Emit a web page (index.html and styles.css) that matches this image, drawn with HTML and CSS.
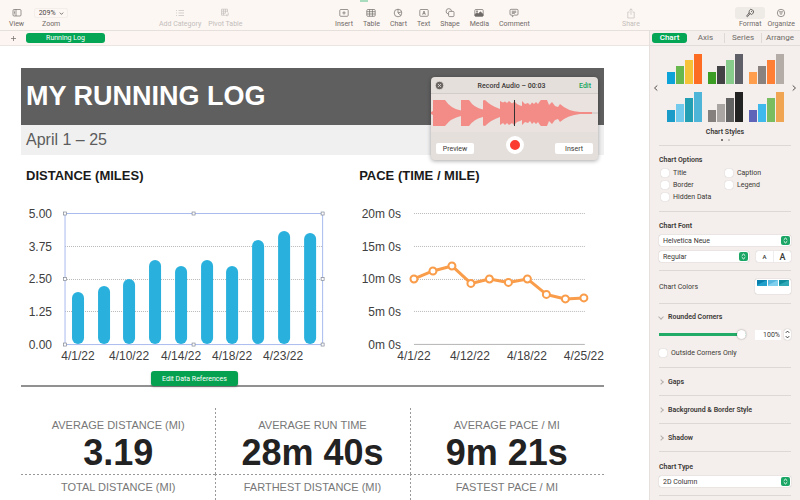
FILE: index.html
```html
<!DOCTYPE html>
<html lang="en">
<head>
  <meta charset="utf-8">
  <title>Running Log</title>
  <link rel="stylesheet" href="styles.css">
</head>
<body>
  <header class="toolbar">
    <span class="notch"></span>
    <div class="tool-group">
      <button class="tool">
        <span class="icon"><svg width="10" height="10" viewBox="0 0 10 10"><rect x="1" y="1.5" width="8" height="6.5" rx="1"/><path d="M4 1.5V8M2 3.2h1M2 4.5h1M2 5.8h1"/></svg></span>
        View
      </button>
      <label class="tool zoom">
        <span class="icon">
          <select><option>209%</option></select>
          <svg width="5" height="5" viewBox="0 0 5 5"><path d="M.8 1.6L2.5 3.4L4.2 1.6"/></svg>
        </span>
        Zoom
      </label>
    </div>
    <div class="tool-group tool-group-table">
      <button class="tool" disabled>
        <span class="icon"><svg width="10" height="10" viewBox="0 0 10 10"><path d="M1 2.5h1M1 5h1M1 7.5h1M3.5 2.5H9M3.5 5H9M3.5 7.5H9"/></svg></span>
        Add Category
      </button>
      <button class="tool" disabled>
        <span class="icon"><svg width="10" height="10" viewBox="0 0 10 10"><path d="M1.5 1.2h6v3M1.5 1.2v6h4M1.5 3.2h6M1.5 5.2h4M3.5 1.2v6M5.5 1.2v4M8.2 4.5v2.8H6M7 6.3l-1 1l1 1"/></svg></span>
        Pivot Table
      </button>
    </div>
    <div class="tool-group">
      <button class="tool">
        <span class="icon"><svg width="10" height="10" viewBox="0 0 10 10"><rect x=".8" y="1.5" width="8.4" height="6.8" rx="1"/><path d="M5 3.2v3.4M3.3 4.9h3.4"/></svg></span>
        Insert
      </button>
      <button class="tool">
        <span class="icon"><svg width="10" height="10" viewBox="0 0 10 10"><rect x=".8" y="1.5" width="8.4" height="6.8" rx="1"/><path d="M.8 3.7h8.4M.8 6h8.4M3.6 1.5v6.8M6.4 1.5v6.8"/></svg></span>
        Table
      </button>
      <button class="tool">
        <span class="icon"><svg width="10" height="10" viewBox="0 0 10 10"><circle cx="5" cy="5" r="3.8"/><path d="M5 1.2V5l2.9 2.4M5 5l3.6-1.2"/></svg></span>
        Chart
      </button>
      <button class="tool">
        <span class="icon"><svg width="10" height="10" viewBox="0 0 10 10"><rect x=".8" y="1.5" width="8.4" height="6.8" rx="1"/><path d="M3.6 6.7L5 3l1.4 3.7M4.1 5.6h1.8"/></svg></span>
        Text
      </button>
      <button class="tool">
        <span class="icon"><svg width="10" height="10" viewBox="0 0 10 10"><path d="M3.3 6A2.7 2.7 0 1 1 6.5 3.2"/><rect x="3.6" y="3.4" width="5.4" height="5.2" rx="1"/></svg></span>
        Shape
      </button>
      <button class="tool">
        <span class="icon"><svg width="10" height="10" viewBox="0 0 10 10"><rect x=".8" y="1.5" width="8.4" height="6.8" rx="1"/><path class="solid" d="M1 6.4l2-1.8l1.4 1.2l2-2l2.6 2.4V8H1z"/><circle class="solid" cx="3" cy="3.2" r=".5"/></svg></span>
        Media
      </button>
      <button class="tool">
        <span class="icon"><svg width="10" height="10" viewBox="0 0 10 10"><path d="M2 1.3h6a1 1 0 0 1 1 1v3.8a1 1 0 0 1-1 1H5.2L3.4 8.8V7.1H2a1 1 0 0 1-1-1V2.3a1 1 0 0 1 1-1zM2.8 3.2h4.4M2.8 4.3h4.4M2.8 5.4h3"/></svg></span>
        Comment
      </button>
    </div>
    <div class="tool-group">
      <button class="tool" disabled>
        <span class="icon"><svg width="10" height="11" viewBox="0 0 10 11"><path d="M3.5 4H1.8v6h6.4V4H6.5M5 6.8V.8M3.3 2.4L5 .8l1.7 1.6"/></svg></span>
        Share
      </button>
    </div>
    <div class="tool-group tool-group-end">
      <button class="tool">
        <span class="icon active"><svg width="10" height="10" viewBox="0 0 10 10"><path d="M5.8 1.2l2.6 1.5c.5 2-.3 3-1.8 3.8L4 4.8c0-1.6.4-2.8 1.8-3.6zM4 4.8L1.6 8.2l.8.6L5.2 5.6M6 3.2l1.2.8"/></svg></span>
        Format
      </button>
      <button class="tool">
        <span class="icon"><svg width="10" height="10" viewBox="0 0 10 10"><circle cx="5" cy="5" r="3.7"/><path d="M2.9 3.8h4.2M3.6 5.1h2.8M4.4 6.4h1.2"/></svg></span>
        Organize
      </button>
    </div>
  </header>

  <div class="workspace">
    <main class="document">
      <nav class="sheet-tabs">
        <button class="add-sheet" aria-label="Add sheet"><svg width="7" height="7" viewBox="0 0 7 7"><path d="M3.5 1v5M1 3.5h5"/></svg></button>
        <button class="sheet-tab">Running Log</button>
      </nav>

      <div class="sheet">
        <h1>MY RUNNING LOG</h1>
        <p class="subtitle">April 1 – 25</p>

        <div class="charts">
          <section class="chart">
            <h2>DISTANCE (MILES)</h2>
            <svg viewBox="0 0 333 181">
              <g class="grid-lines">
                <path d="M44 56.5h257M44 89.5h257M44 121.5h257"/>
              </g>
              <g class="bars">
                <rect x="51" y="102" width="12" height="52" rx="6"/>
                <rect x="77" y="96" width="12" height="58" rx="6"/>
                <rect x="102" y="89" width="12" height="65" rx="6"/>
                <rect x="128" y="70" width="12" height="84" rx="6"/>
                <rect x="154" y="76" width="12" height="78" rx="6"/>
                <rect x="180" y="70" width="12" height="84" rx="6"/>
                <rect x="205" y="76" width="12" height="78" rx="6"/>
                <rect x="231" y="50" width="12" height="104" rx="6"/>
                <rect x="257" y="41" width="12" height="113" rx="6"/>
                <rect x="283" y="43" width="12" height="111" rx="6"/>
              </g>
              <rect class="selection" x="44" y="23.5" width="257.5" height="131"/>
              <g class="handles">
                <rect x="42.5" y="22" width="3" height="3"/>
                <rect x="171" y="22" width="3" height="3"/>
                <rect x="300" y="22" width="3" height="3"/>
                <rect x="42.5" y="87.5" width="3" height="3"/>
                <rect x="300" y="87.5" width="3" height="3"/>
                <rect x="42.5" y="153" width="3" height="3"/>
                <rect x="171" y="153" width="3" height="3"/>
                <rect x="300" y="153" width="3" height="3"/>
              </g>
              <g class="axis axis-y">
                <text x="31" y="28">5.00</text>
                <text x="31" y="61">3.75</text>
                <text x="31" y="93">2.50</text>
                <text x="31" y="126">1.25</text>
                <text x="31" y="159">0.00</text>
              </g>
              <g class="axis axis-x">
                <text x="57" y="170">4/1/22</text>
                <text x="108" y="170">4/10/22</text>
                <text x="160" y="170">4/14/22</text>
                <text x="211" y="170">4/18/22</text>
                <text x="262" y="170">4/23/22</text>
              </g>
            </svg>
            <button class="edit-refs">Edit Data References</button>
          </section>

          <section class="chart">
            <h2>PACE (TIME / MILE)</h2>
            <svg viewBox="0 0 250 181">
              <g class="grid-lines">
                <path d="M60 23.5h171M60 56.5h171M60 89.5h171M60 121.5h171"/>
              </g>
              <path class="baseline" d="M60 154.5h171"/>
              <path class="pace-line" d="M60 89L79 81L98 76L117 93.5L135.5 89L154.5 92.5L173.5 89L192.5 104.5L211.5 109L230 108"/>
              <g class="pace-points">
                <circle cx="60" cy="89" r="3.5"/>
                <circle cx="79" cy="81" r="3.5"/>
                <circle cx="98" cy="76" r="3.5"/>
                <circle cx="117" cy="93.5" r="3.5"/>
                <circle cx="135.5" cy="89" r="3.5"/>
                <circle cx="154.5" cy="92.5" r="3.5"/>
                <circle cx="173.5" cy="89" r="3.5"/>
                <circle cx="192.5" cy="104.5" r="3.5"/>
                <circle cx="211.5" cy="109" r="3.5"/>
                <circle cx="230" cy="108" r="3.5"/>
              </g>
              <g class="axis axis-y">
                <text x="47" y="28">20m 0s</text>
                <text x="47" y="61">15m 0s</text>
                <text x="47" y="93">10m 0s</text>
                <text x="47" y="126">5m 0s</text>
                <text x="47" y="159">0m 0s</text>
              </g>
              <g class="axis axis-x">
                <text x="60" y="170">4/1/22</text>
                <text x="116" y="170">4/12/22</text>
                <text x="173" y="170">4/18/22</text>
                <text x="230" y="170">4/25/22</text>
              </g>
            </svg>
          </section>
        </div>

        <div class="stats">
          <div class="stat"><h3>AVERAGE DISTANCE (MI)</h3><strong>3.19</strong></div>
          <div class="stat"><h3>AVERAGE RUN TIME</h3><strong>28m 40s</strong></div>
          <div class="stat"><h3>AVERAGE PACE / MI</h3><strong>9m 21s</strong></div>
          <div class="stat next"><h3>TOTAL DISTANCE (MI)</h3></div>
          <div class="stat next"><h3>FARTHEST DISTANCE (MI)</h3></div>
          <div class="stat next"><h3>FASTEST PACE / MI</h3></div>
        </div>
      </div>

      <div class="recorder">
        <div class="recorder-head">
          <button class="close" aria-label="Close"><svg width="9" height="9" viewBox="0 0 9 9"><circle cx="4.5" cy="4.5" r="4.2"/><path d="M3 3l3 3M6 3L3 6"/></svg></button>
          <span>Record Audio – 00:03</span>
          <button class="edit">Edit</button>
        </div>
        <svg class="wave" viewBox="0 0 167 38">
          <path class="wave-axis" d="M0 19H167"/>
          <path class="wave-shape" d="M0 18L2 17V6H14Q20 15 30 16.5V6H38Q43 14 52 15.5V6.500L54 6Q60 12 69 15V7L72 8.500L74 7.500L76 9L78 7L81 9.500L83 8L83 7L86 10L89 11.500L91 12V7L94 10L97 9L99 11L101 8.500L103 10L105 8L107 10L109 7L110 6H116L118 11L121 8L124 12L127 13L129 10Q137 17.500 149 18L161 18V20L149 20Q137 21 129 28L127 25L124 26L121 30L118 27L116 32H110L109 31L107 28L105 30L103 28L101 30L99 27L97 29L94 28L91 31V26L89 27L86 28L83 31L81 29L78 31L76 29L74 31L72 29L69 31V23Q60 26 54 32L52 31.500V23Q43 25 38 32H30V22Q20 24 14 32H2V21L0 20Z"/>
          <path class="playhead" d="M83.5 6V32"/>
        </svg>
        <div class="recorder-actions">
          <button>Preview</button>
          <button class="record" aria-label="Record"></button>
          <button>Insert</button>
        </div>
      </div>
    </main>

    <aside class="inspector">
      <nav class="inspector-tabs">
        <button class="current">Chart</button>
        <button>Axis</button>
        <button>Series</button>
        <button>Arrange</button>
      </nav>

      <section class="panel styles">
        <div class="gallery">
          <button aria-label="Previous styles"><svg width="6" height="8" viewBox="0 0 6 8"><path d="M4.3 1.5L1.5 4L4.3 6.5"/></svg></button>
          <div class="thumbs">
            <svg viewBox="0 0 35 30"><path fill="#0da2d8" d="M0 18h8v12H0z"/><path fill="#68b84e" d="M9 12h8v18H9z"/><path fill="#f6c237" d="M18 6h8v24h-8z"/><path fill="#fc6c22" d="M27 0h8v30h-8z"/></svg>
            <svg viewBox="0 0 35 30"><path fill="#3d9e25" d="M0 18h8v12H0z"/><path fill="#434345" d="M9 12h8v18H9z"/><path fill="#87cc8a" d="M18 6h8v24h-8z"/><path fill="#5f5f67" d="M27 0h8v30h-8z"/></svg>
            <svg viewBox="0 0 35 30"><path fill="#ff9f4d" d="M0 18h8v12H0z"/><path fill="#8a827e" d="M9 12h8v18H9z"/><path fill="#ff8035" d="M18 6h8v24h-8z"/><path fill="#b4ada7" d="M27 0h8v30h-8z"/></svg>
            <svg viewBox="0 0 35 30"><path fill="#1b9cc8" d="M0 18h8v12H0z"/><path fill="#72caed" d="M9 12h8v18H9z"/><path fill="#239fb3" d="M18 6h8v24h-8z"/><path fill="#4fb5d8" d="M27 0h8v30h-8z"/></svg>
            <svg viewBox="0 0 35 30"><path fill="#85807d" d="M0 18h8v12H0z"/><path fill="#aaa6a3" d="M9 12h8v18H9z"/><path fill="#626262" d="M18 6h8v24h-8z"/><path fill="#222222" d="M27 0h8v30h-8z"/></svg>
            <svg viewBox="0 0 35 30"><path fill="#6064b8" d="M0 18h8v12H0z"/><path fill="#3fb9ec" d="M9 12h8v18H9z"/><path fill="#7abd61" d="M18 6h8v24h-8z"/><path fill="#f0a553" d="M27 0h8v30h-8z"/></svg>
          </div>
          <button aria-label="Next styles"><svg width="6" height="8" viewBox="0 0 6 8"><path d="M1.7 1.5L4.5 4L1.7 6.5"/></svg></button>
        </div>
        <h4>Chart Styles</h4>
        <div class="dots"><i class="on"></i><i></i></div>
      </section>

      <section class="panel options">
        <h4>Chart Options</h4>
        <div class="checks">
          <label><input type="checkbox"> Title</label>
          <label><input type="checkbox"> Caption</label>
          <label><input type="checkbox"> Border</label>
          <label><input type="checkbox"> Legend</label>
          <label><input type="checkbox"> Hidden Data</label>
        </div>
      </section>

      <section class="panel font">
        <h4>Chart Font</h4>
        <div class="select">
          <select aria-label="Font family"><option>Helvetica Neue</option></select>
          <svg width="9" height="9" viewBox="0 0 9 9"><rect width="9" height="9" rx="2"/><path d="M2.8 3.7L4.5 2.1L6.2 3.7M2.8 5.3L4.5 6.9L6.2 5.3"/></svg>
        </div>
        <div class="font-row">
          <div class="select">
            <select aria-label="Font style"><option>Regular</option></select>
            <svg width="9" height="9" viewBox="0 0 9 9"><rect width="9" height="9" rx="2"/><path d="M2.8 3.7L4.5 2.1L6.2 3.7M2.8 5.3L4.5 6.9L6.2 5.3"/></svg>
          </div>
          <div class="font-size">
            <button class="smaller" aria-label="Smaller">A</button>
            <button class="larger" aria-label="Larger">A</button>
          </div>
        </div>
      </section>

      <section class="panel colors">
        <span>Chart Colors</span>
        <button class="swatch" aria-label="Chart colors">
          <svg viewBox="0 0 32 6"><path fill="#1f9fc9" d="M0 0h10v6H0z"/><path fill="#087fac" d="M0 0h10L0 5z"/><path fill="#7fcfee" d="M11 0h10v6H11z"/><path fill="#56b8de" d="M11 0h10L11 5z"/><path fill="#2fa9b5" d="M22 0h10v6H22z"/><path fill="#108c9d" d="M22 0h10L22 5z"/></svg>
        </button>
      </section>

      <section class="panel corners">
        <h4 class="disclosure open">Rounded Corners</h4>
        <div class="slider-row">
          <input type="range" min="0" max="100" value="100" aria-label="Corner radius">
          <input type="text" value="100%" aria-label="Corner radius value">
          <button class="stepper" aria-label="Step"><svg width="7" height="11" viewBox="0 0 7 11"><path d="M1.8 3.8L3.5 2.1L5.2 3.8M1.8 7.2L3.5 8.9L5.2 7.2"/></svg></button>
        </div>
        <label><input type="checkbox"> Outside Corners Only</label>
      </section>

      <section class="panel closed"><h4 class="disclosure">Gaps</h4></section>
      <section class="panel closed"><h4 class="disclosure">Background &amp; Border Style</h4></section>
      <section class="panel closed"><h4 class="disclosure">Shadow</h4></section>

      <section class="panel type">
        <h4>Chart Type</h4>
        <div class="select">
          <select aria-label="Chart type"><option>2D Column</option></select>
          <svg width="9" height="9" viewBox="0 0 9 9"><rect width="9" height="9" rx="2"/><path d="M2.8 3.7L4.5 2.1L6.2 3.7M2.8 5.3L4.5 6.9L6.2 5.3"/></svg>
        </div>
      </section>
    </aside>
  </div>
</body>
</html>
```

FILE: styles.css
```css
* {
  box-sizing: border-box;
}

body {
  margin: 0;
  height: 100vh;
  display: flex;
  flex-direction: column;
  overflow: hidden;
  font-family: Roboto, "Liberation Sans", sans-serif;
  font-size: 7px;
  line-height: 10px;
  color: #3a3735;
  background: #fff;
}

h1, h2, h3, h4, p {
  margin: 0;
}

button, select, input {
  font: inherit;
  color: inherit;
  margin: 0;
  padding: 0;
  border: 0;
  background: none;
  appearance: none;
}

svg {
  display: block;
  fill: none;
}

/* toolbar */
.toolbar {
  position: relative;
  display: grid;
  grid-template-columns: 150fr 176fr 287fr 117fr 70fr;
  padding-top: 8px;
  background: #fdf7f3;
  border-bottom: 1px solid #e6e0dd;
}

.notch {
  position: absolute;
  top: 0;
  left: 45%;
  width: 8px;
  height: 2px;
  background: #a9dcbf;
}

.tool-group {
  display: flex;
  align-items: flex-start;
  gap: 10px;
  padding-left: 9px;
}

.tool-group-table {
  gap: 7px;
}

.tool-group-end {
  gap: 6px;
  padding-left: 0;
  padding-right: 5px;
  justify-content: flex-end;
}

.tool {
  display: flex;
  flex-direction: column;
  align-items: center;
  gap: 2px;
  padding-bottom: 1px;
  color: #6f6a67;
  line-height: 9px;
  white-space: nowrap;
}

.tool:disabled {
  color: #c3bebb;
}

.icon {
  height: 10px;
  display: flex;
  align-items: center;
  justify-content: center;
}

.icon svg {
  stroke: currentColor;
  stroke-width: .7;
}

.icon .solid {
  fill: currentColor;
}

.icon.active {
  width: 30px;
  height: 12px;
  margin: -1px -5px;
  border-radius: 3px;
  background: #eeeae6;
  color: #3a3735;
}

.zoom .icon {
  width: 34px;
  gap: 3px;
  border: 1px solid #f3eeea;
  border-radius: 2px;
  color: #4a4644;
}

/* sheet */
.workspace {
  flex: 1;
  display: flex;
  min-height: 0;
}

.document {
  flex: 1;
  position: relative;
  min-width: 0;
  overflow: hidden;
}

.sheet-tabs {
  display: flex;
  gap: 9px;
  height: 15px;
  padding: 2px 10px;
  background: #fdf5f2;
  border-bottom: 1px solid #ebe5e2;
}

.add-sheet svg {
  stroke: #6f6a67;
  stroke-width: .7;
}

.sheet-tab {
  width: 79px;
  height: 10px;
  border-radius: 3px;
  background: #04a554;
  color: #fff;
}

.sheet {
  padding: 22px 45px 0 21px;
  font-family: "Liberation Sans", Arial, sans-serif;
}

.sheet h1 {
  padding: 0 5px;
  font-size: 27px;
  line-height: 57px;
  color: #fff;
  background: #5f5f5f;
}

.subtitle {
  padding: 0 5px;
  font-size: 16px;
  line-height: 30px;
  color: #5c5c5c;
  background: #f0f0f0;
}

.charts {
  display: grid;
  grid-template-columns: 4fr 3fr;
  padding-top: 12px;
  border-bottom: 2px solid #919191;
}

.chart {
  position: relative;
}

.chart h2 {
  padding: 0 5px;
  font-size: 13px;
  line-height: 18px;
  color: #1a1a1a;
}

.chart svg {
  width: 100%;
  margin-top: 5px;
  margin-bottom: 14px;
}

.grid-lines {
  stroke: #b9b9b9;
  stroke-dasharray: 1 1;
}

.baseline {
  stroke: #b5b5b5;
}

.bars {
  fill: #29b0dc;
}

.selection {
  stroke: #a9bbef;
}

.handles {
  fill: #fff;
  stroke: #808895;
  stroke-width: .7;
}

.axis {
  font-size: 12px;
  fill: #404040;
}

.axis-y {
  text-anchor: end;
}

.axis-x {
  text-anchor: middle;
}

.pace-line {
  stroke: #f99d4b;
  stroke-width: 3;
  stroke-linejoin: round;
}

.pace-points {
  fill: #fff;
  stroke: #f99d4b;
  stroke-width: 2;
}

.edit-refs {
  position: absolute;
  left: 39%;
  bottom: -1px;
  width: 87px;
  height: 15px;
  border-radius: 3px;
  background: #05a050;
  color: #fff;
  font-family: Roboto, sans-serif;
  box-shadow: 0 1px 2px rgba(0, 0, 0, .3);
}

.stats {
  display: grid;
  grid-template-columns: repeat(3, 1fr);
  margin-top: 21px;
}

.stat {
  padding-top: 10px;
  text-align: center;
  background: repeating-linear-gradient(#999 0 2px, transparent 2px 4px) left / 1px 100% no-repeat;
}

.stat:nth-child(3n + 1) {
  background: none;
}

.stat h3 {
  font-size: 11px;
  font-weight: normal;
  line-height: 14px;
  color: #777;
}

.stat strong {
  display: block;
  font-size: 36px;
  line-height: 42px;
  color: #222;
}

.stat.next {
  padding-top: 6px;
  padding-bottom: 20px;
  background:
    repeating-linear-gradient(90deg, #999 0 2px, transparent 2px 4px) top / 100% 1px no-repeat,
    repeating-linear-gradient(#999 0 2px, transparent 2px 4px) left / 1px 100% no-repeat;
}

.stat.next:nth-child(3n + 1) {
  background: repeating-linear-gradient(90deg, #999 0 2px, transparent 2px 4px) top / 100% 1px no-repeat;
}

/* floating audio recorder */
.recorder {
  position: absolute;
  top: 46px;
  right: 51px;
  width: 167px;
  border-radius: 4px;
  background: #e4dfdb;
  box-shadow: 0 1px 4px rgba(0, 0, 0, .35);
  overflow: hidden;
}

.recorder-head {
  display: flex;
  align-items: center;
  justify-content: space-between;
  height: 17px;
  padding: 1px 7px 0 4px;
  font-weight: 500;
  border-bottom: 1px solid #d2cdc9;
}

.close svg {
  fill: #6b6663;
  stroke: #e4dfdb;
  stroke-width: .8;
}

.edit {
  color: #11a65a;
}

.wave {
  width: 100%;
  background: #e9e2de;
}

.wave-axis {
  stroke: #c9c3c0;
}

.wave-shape {
  fill: #f38b87;
}

.playhead {
  stroke: #333;
}

.recorder-actions {
  display: flex;
  justify-content: space-between;
  align-items: center;
  padding: 3px 5px 6px;
}

.recorder-actions button {
  width: 38px;
  height: 11px;
  margin-top: 8px;
  border-radius: 2px;
  background: #fff;
}

.recorder-actions .record {
  width: 18px;
  height: 18px;
  margin-top: 0;
  border: 4px solid #fff;
  border-radius: 50%;
  background: #fc3b30;
}

/* inspector */
.inspector {
  width: 151px;
  background: #f4efec;
  border-left: 1px solid #e6e0dd;
  overflow: hidden;
}

.inspector-tabs {
  display: grid;
  grid-template-columns: 35fr 37fr 37fr 37fr;
  height: 15px;
  padding: 2px;
  border-bottom: 1px solid #e2dcd9;
}

.inspector-tabs button {
  height: 10px;
  font-size: 8px;
  color: #6f6a67;
  border-left: 1px solid #dfd9d6;
}

.inspector-tabs .current {
  border: 0;
  border-radius: 3px;
  background: #04a554;
  color: #fff;
  font-weight: 500;
}

.inspector-tabs .current + button {
  border-left: 0;
}

.panel {
  margin: 0 9px;
  padding: 9px 0 8px;
  border-bottom: 1px solid #ddd8d4;
}

.panel h4 {
  font-size: 7px;
  font-weight: 600;
}

.styles {
  padding: 8px 0 4px;
  text-align: center;
}

.gallery {
  display: flex;
  align-items: center;
  justify-content: space-between;
  margin: 0 -6px 5px;
}

.gallery button svg {
  stroke: #55504d;
}

.thumbs {
  display: grid;
  grid-template-columns: repeat(3, 35px);
  gap: 8px 6px;
}

.dots {
  display: flex;
  justify-content: center;
  gap: 5px;
  margin-top: 2px;
}

.dots i {
  width: 2px;
  height: 2px;
  border-radius: 50%;
  background: #bab5b2;
}

.dots .on {
  background: #55504d;
}

.checks {
  display: grid;
  grid-template-columns: 64px 1fr;
  margin-top: 2px;
  padding-left: 2px;
}

.panel label {
  display: flex;
  align-items: center;
  gap: 4px;
  line-height: 12px;
}

input[type="checkbox"] {
  width: 8px;
  height: 8px;
  border-radius: 2px;
  background: #fff;
  box-shadow: 0 0 1px rgba(0, 0, 0, .3);
}

.select {
  position: relative;
  flex: 1;
  margin-top: 4px;
}

.select select {
  display: block;
  width: 100%;
  height: 11px;
  padding-left: 4px;
  border-radius: 2px;
  background: #fff;
  box-shadow: 0 0 1px rgba(0, 0, 0, .4);
}

.select svg {
  position: absolute;
  top: 1px;
  right: 1px;
  fill: #1ba665;
  pointer-events: none;
}

.select path {
  fill: none;
  stroke: #fff;
}

.font-row {
  display: flex;
  gap: 7px;
  margin-top: 1px;
}

.font-size {
  display: flex;
  width: 35px;
  height: 11px;
  margin-top: 4px;
  border-radius: 2px;
  background: #fff;
  box-shadow: 0 0 1px rgba(0, 0, 0, .3);
}

.font-size button {
  flex: 1;
  font-weight: 500;
}

.font-size .smaller {
  font-size: 6px;
}

.font-size .larger {
  font-size: 9px;
  border-left: 1px solid #eee;
}

.colors {
  display: flex;
  align-items: center;
  justify-content: space-between;
  padding: 8px 0 9px;
}

.swatch {
  width: 36px;
  height: 15px;
  padding: 1px 2px 8px;
  border-radius: 2px;
  background: #fff;
  box-shadow: 0 0 1px rgba(0, 0, 0, .4);
}

.corners {
  padding: 8px 0 8px;
}

.slider-row {
  display: flex;
  align-items: center;
  gap: 3px;
  height: 13px;
  margin: 6px 0;
}

input[type="range"] {
  width: 87px;
  height: 9px;
  margin-right: 6px;
  background: linear-gradient(#22ab67, #22ab67) center / 100% 3px no-repeat;
}

input[type="range"]::-webkit-slider-thumb {
  appearance: none;
  width: 9px;
  height: 9px;
  border-radius: 50%;
  background: #fff;
  box-shadow: 0 0 2px rgba(0, 0, 0, .4);
}

input[type="text"] {
  flex: 1;
  min-width: 0;
  height: 10px;
  padding-right: 1px;
  text-align: right;
  background: #fff;
}

.stepper {
  border-radius: 3px;
  background: #fff;
  box-shadow: 0 0 1px rgba(0, 0, 0, .4);
}

.stepper svg {
  stroke: #3a3735;
}

.disclosure {
  display: flex;
  align-items: center;
  gap: 5px;
}

.disclosure::before {
  content: "";
  width: 3px;
  height: 3px;
  border: solid #b5afac;
  border-width: 1px 1px 0 0;
  transform: rotate(45deg);
}

.disclosure.open::before {
  transform: rotate(135deg);
}

.type {
  padding-top: 10px;
}
```
